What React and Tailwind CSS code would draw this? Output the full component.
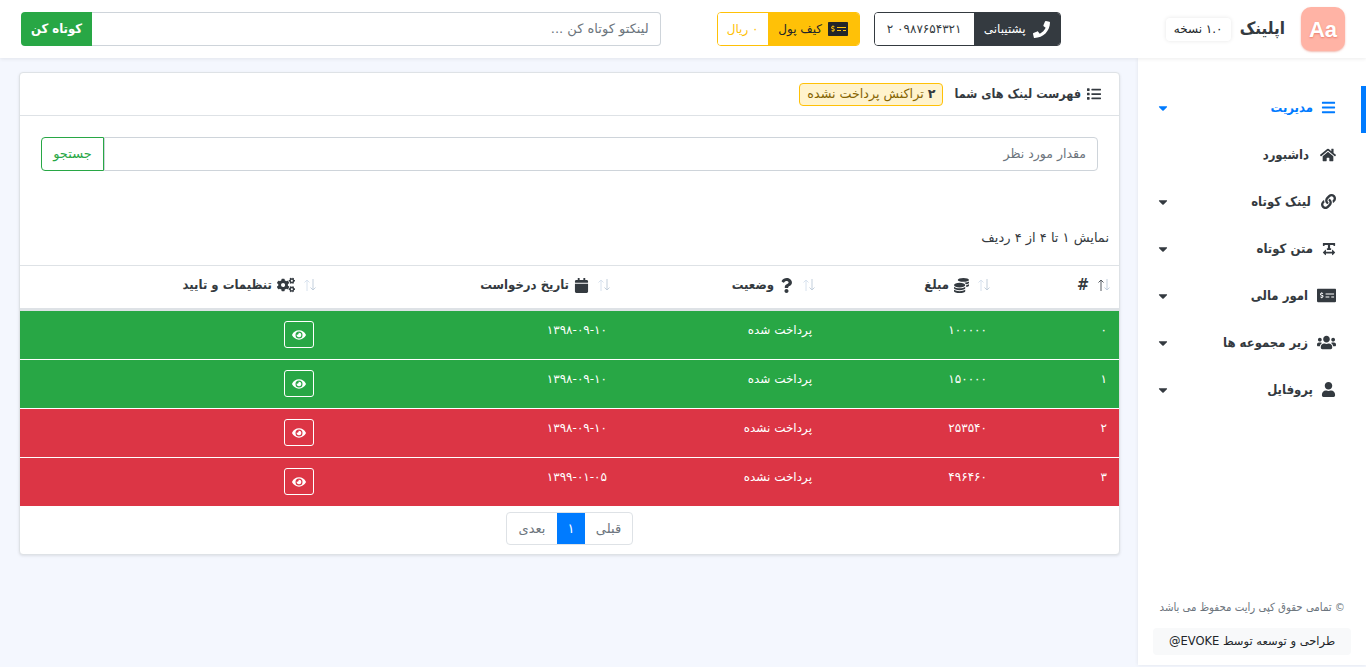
import {
  FaBars,
  FaCalendar,
  FaCaretDown,
  FaCoins,
  FaCogs,
  FaEye,
  FaHome,
  FaLink,
  FaList,
  FaMoneyCheckAlt,
  FaPhone,
  FaQuestion,
  FaTextWidth,
  FaUser,
  FaUsers,
} from "react-icons/fa";

const menu = [
  { label: "مدیریت", icon: FaBars, size: 15, box: "w-[18px]", caret: true, active: true },
  { label: "داشبورد", icon: FaHome, size: 16, box: "w-[22px]" },
  { label: "لینک کوتاه", icon: FaLink, size: 15, box: "w-[20px]", caret: true },
  { label: "متن کوتاه", icon: FaTextWidth, size: 14, box: "w-[18px]", caret: true },
  { label: "امور مالی", icon: FaMoneyCheckAlt, size: 19, box: "w-[23px]", caret: true },
  { label: "زیر مجموعه ها", icon: FaUsers, size: 19, box: "w-[23px]", caret: true },
  { label: "پروفایل", icon: FaUser, size: 15, box: "w-[18px]", caret: true },
];

const rows = [
  { id: "۰", amount: "۱۰۰۰۰۰", status: "پرداخت شده", date: "۱۳۹۸-۰۹-۱۰", bg: "bg-[#28a745]" },
  { id: "۱", amount: "۱۵۰۰۰۰", status: "پرداخت شده", date: "۱۳۹۸-۰۹-۱۰", bg: "bg-[#28a745]" },
  { id: "۲", amount: "۲۵۳۵۴۰", status: "پرداخت نشده", date: "۱۳۹۸-۰۹-۱۰", bg: "bg-[#dc3545]" },
  { id: "۳", amount: "۴۹۶۴۶۰", status: "پرداخت نشده", date: "۱۳۹۹-۰۱-۰۵", bg: "bg-[#dc3545]" },
];

const SortArrows = ({ active = false }) => (
  <svg width="14" height="14" viewBox="0 0 14 14" fill="none" strokeWidth="1" className="shrink-0">
    <path d="M4 13V2M1.5 4.5 4 2l2.5 2.5" stroke={active ? "#555b61" : "#d8e2ee"} />
    <path d="M10 1v11M7.500 9.500 10 12l2.500-2.500" stroke="#c3cfdc" />
  </svg>
);

const HeadCell = ({ icon: Icon, iconSize = 15, label, active, labelClass = "", className = "" }) => (
  <th
    className={`${className} h-[46px] border-b-[3px] border-t border-b-[#dee2e6] border-t-[#dee2e6] p-0 pb-[4px] pr-[8px] align-middle font-bold`}
  >
    <div className="flex items-center gap-[8px] text-[#343a40]">
      <SortArrows active={active} />
      <span className="flex items-center gap-[5px]">
        {Icon && <Icon size={iconSize} />}
        <span className={labelClass}>{label}</span>
      </span>
    </div>
  </th>
);

const App = () => {
  return (
    <div
      dir="rtl"
      className="min-h-[667px] overflow-hidden bg-[#f4f7fe] font-['DejaVu_Sans',sans-serif] text-[13px] text-[#212529]"
    >
      <header className="relative z-10 flex h-[58px] items-center bg-white px-[21px] shadow-[0_1px_4px_rgba(0,0,0,0.08)]">
        <div
          dir="ltr"
          className="flex h-[44px] w-[44px] items-center justify-center rounded-[10px] bg-[#ffb3a5] font-['Liberation_Sans',sans-serif] text-[22px] font-bold text-white shadow-[0_1px_2px_rgba(230,120,100,0.5)] [text-shadow:0_1px_2px_rgba(220,90,70,0.6)]"
        >
          Aa
        </div>
        <span className="mr-[16px] font-['DejaVu_Sans_Condensed','DejaVu_Sans',sans-serif] text-[17px] font-bold text-[#343a40]">
          اپلینک
        </span>
        <span className="mr-[9px] flex h-[23px] w-[65px] items-center justify-center rounded-[4px] bg-white text-[12px] shadow-[0_0_4px_rgba(0,0,0,0.1)]">
          ۱.۰ نسخه
        </span>
        <div className="mr-[105px] flex h-[34px] w-[187px] overflow-hidden rounded-[4px] border border-[#343a40] text-[12px]">
          <div className="flex w-[86px] items-center justify-center gap-[7px] bg-[#343a40] text-white">
            <FaPhone size={17} />
            <span>پشتیبانی</span>
          </div>
          <div className="flex flex-1 items-center justify-center bg-white text-[#343a40]">۰۹۸۷۶۵۴۳۲۱ ۲</div>
        </div>
        <div className="mr-[14px] flex h-[34px] w-[143px] overflow-hidden rounded-[4px] border border-[#ffc107] text-[12px]">
          <div className="flex w-[91px] items-center justify-center gap-[6px] bg-[#ffc107] text-[#212529]">
            <FaMoneyCheckAlt size={20} />
            <span>کیف پول</span>
          </div>
          <div className="flex flex-1 items-center justify-center bg-white text-[#ffc107]">۰ ریال</div>
        </div>
        <div className="mr-[56px] flex h-[34px] flex-1">
          <div className="flex flex-1 items-center rounded-r-[4px] border border-l-0 border-[#ced4da] bg-white pr-[11px] text-[#6c757d]">
            لینکتو کوتاه کن ...
          </div>
          <button className="w-[71px] rounded-l-[4px] bg-[#28a745] font-['DejaVu_Sans_Condensed','DejaVu_Sans',sans-serif] font-bold text-white">
            کوتاه کن
          </button>
        </div>
      </header>

      <div className="flex items-start">
        <aside className="flex h-[607px] w-[228px] shrink-0 flex-col bg-white shadow-[0_0_4px_rgba(0,0,0,0.08)]">
          <nav className="flex flex-col pt-[28px] font-['DejaVu_Sans_Condensed','DejaVu_Sans',sans-serif]">
            {menu.map(({ label, icon: Icon, size, box, caret, active }) => (
              <div
                key={label}
                className={`relative flex h-[47px] items-center pb-[4px] pl-[18px] pr-[30px] font-bold ${
                  active ? "text-[#007bff]" : "text-[#343a40]"
                }`}
              >
                {active && <span className="absolute right-0 top-0 h-[47px] w-[5px] bg-[#007bff]" />}
                <span className={`flex ${box} justify-start`}>
                  <Icon size={size} />
                </span>
                <span className="mr-[5px] flex-1">{label}</span>
                {caret && <FaCaretDown size={14} />}
              </div>
            ))}
          </nav>
          <div className="mt-auto px-[15px] pb-[10px]">
            <p className="mb-[11px] whitespace-nowrap pr-[6px] font-['DejaVu_Sans_Condensed','DejaVu_Sans',sans-serif] text-[11.3px] text-[#6c757d]">
              © تمامی حقوق کپی رایت محفوظ می باشد
            </p>
            <div className="flex h-[27px] items-center justify-center rounded-[4px] bg-[#f8f9fa] text-[11.5px]">
              طراحی و توسعه توسط EVOKE@
            </div>
          </div>
        </aside>

        <main className="mr-[18px] mt-[14px] w-[1101px] rounded-[4px] border border-[#dee2e6] bg-white shadow-[0_1px_3px_rgba(0,0,0,0.1)]">
          <div className="flex h-[43px] items-center border-b border-[#dee2e6] pr-[18px] text-[#343a40]">
            <FaList size={14} />
            <span className="mr-[6px] font-['DejaVu_Sans_Condensed','DejaVu_Sans',sans-serif] text-[12.5px] font-bold">
              فهرست لینک های شما
            </span>
            <span className="mr-[11px] flex h-[23px] items-center rounded-[4px] border border-[#ffc107] bg-[#fff3cd] px-[7px] text-[12.7px] text-[#856404]">
              <b className="ml-[4px] text-[#343a40]">۲</b>تراکنش پرداخت نشده
            </span>
          </div>
          <div className="flex h-[149px] flex-col px-[21px] pt-[21px]">
            <div className="flex h-[34px]">
              <div className="flex flex-1 items-center rounded-r-[4px] border border-[#ced4da] pr-[11px] text-[12.5px] text-[#6c757d]">
                مقدار مورد نظر
              </div>
              <button className="w-[63px] rounded-l-[4px] border border-[#28a745] text-[#28a745]">جستجو</button>
            </div>
            <p className="-mr-[11px] mt-[57px] text-[#343a40]">نمایش ۱ تا ۴ از ۴ ردیف</p>
          </div>
          <table className="w-full table-fixed border-separate border-spacing-0 text-right">
            <thead className="font-['DejaVu_Sans_Condensed','DejaVu_Sans',sans-serif]">
              <tr>
                <HeadCell label="#" active labelClass="text-[16px]" className="w-[120px]" />
                <HeadCell label="مبلغ" icon={FaCoins} className="w-[175px]" />
                <HeadCell label="وضعیت" icon={FaQuestion} className="w-[205px]" />
                <HeadCell label="تاریخ درخواست" icon={FaCalendar} className="w-[294px]" />
                <HeadCell label="تنظیمات و تایید" icon={FaCogs} iconSize={18} />
              </tr>
            </thead>
            <tbody className="text-[12px]">
              {rows.map((row, i) => {
                const isLast = i === rows.length - 1;
                const line = isLast ? "" : "border-b border-white";
                return (
                  <tr key={row.id} className={`${row.bg} text-white`}>
                    <td className={`${line} ${isLast ? "h-[48px]" : "h-[49px]"} pr-[12px] pt-[10px] align-top`}>{row.id}</td>
                    <td className={`${line} pr-[12px] pt-[10px] align-top`}>{row.amount}</td>
                    <td className={`${line} pr-[12px] pt-[10px] align-top`}>{row.status}</td>
                    <td className={`${line} pr-[12px] pt-[10px] align-top`}>{row.date}</td>
                    <td className={`${line} pr-[11px] pt-[10px] align-top`}>
                      <button className="flex h-[27px] w-[30px] items-center justify-center rounded-[3px] border border-white">
                        <FaEye size={14} />
                      </button>
                    </td>
                  </tr>
                );
              })}
            </tbody>
          </table>
          <div className="flex h-[48px] justify-center pt-[6px]">
            <div className="flex h-[33px] overflow-hidden rounded-[4px] border border-[#dee2e6] text-[#6c757d]">
              <span className="flex w-[47px] items-center justify-center">قبلی</span>
              <span className="flex w-[28px] items-center justify-center bg-[#007bff] text-white">۱</span>
              <span className="flex w-[50px] items-center justify-center">بعدی</span>
            </div>
          </div>
        </main>
      </div>
    </div>
  );
};

export default App;
